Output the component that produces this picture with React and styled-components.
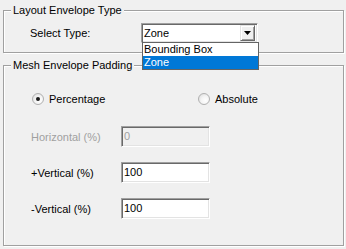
import React from "react";
import styled, { createGlobalStyle } from "styled-components";

const GlobalStyle = createGlobalStyle`
  html, body {
    margin: 0;
    padding: 0;
    background: #f0f0f0;
    width: 346px;
    height: 249px;
    overflow: hidden;
  }
  body {
    font-family: "Liberation Sans", Arial, sans-serif;
    font-size: 11px;
    color: #000;
  }
`;

const Page = styled.div`
  display: flex;
  flex-direction: column;
  gap: 6px;
  padding: 4px 2px 0 3px;
  width: 346px;
  box-sizing: border-box;
`;

const GroupBox = styled.fieldset`
  margin: 0;
  min-width: 0;
  padding: 0;
  border: 1px solid #a0a0a0;
  box-shadow: inset 1px 1px 0 #fff, 1px 1px 0 #fff;
`;

const GroupBody = styled.div`
  padding: ${(p) => p.$pad};
`;

const Legend = styled.legend`
  margin-left: 7px;
  padding: 0 2px;
  line-height: 13px;
  background: #f0f0f0;
  color: #000;
`;

const SelectRow = styled.div`
  display: grid;
  grid-template-columns: 111px 117px;
  align-items: center;
`;

const Label = styled.span`
  color: ${(p) => (p.$disabled ? "#a0a0a0" : "#000")};
  white-space: nowrap;
`;

const Combo = styled.div`
  position: relative;
  height: 20px;
  box-sizing: border-box;
  display: flex;
  align-items: center;
  background: #fff;
  border: 1px solid;
  border-color: #a0a0a0 #fff #fff #a0a0a0;
  box-shadow: inset 1px 1px 0 #696969, inset -1px -1px 0 #e3e3e3;
  padding: 0 2px 0 2px;
`;

const ComboText = styled.span`
  flex: 1;
  line-height: 14px;
`;

const ArrowButton = styled.div`
  width: 15px;
  height: 16px;
  box-sizing: border-box;
  display: flex;
  align-items: center;
  justify-content: center;
  background: #f0f0f0;
  border: 1px solid;
  border-color: #e3e3e3 #696969 #696969 #e3e3e3;
  box-shadow: inset 1px 1px 0 #fff, inset -1px -1px 0 #a0a0a0;
`;

const DropList = styled.ul`
  position: absolute;
  top: 100%;
  left: 0;
  width: 117px;
  margin: 0;
  padding: 0;
  list-style: none;
  box-sizing: border-box;
  background: #fff;
  border: 1px solid #646464;
  z-index: 2;
`;

const DropItem = styled.li`
  line-height: 13px;
  height: 13px;
  padding-left: 1px;
  background: ${(p) => (p.$selected ? "#0078d7" : "#fff")};
  color: ${(p) => (p.$selected ? "#fff" : "#000")};
`;

const RadioRow = styled.div`
  display: grid;
  grid-template-columns: 166px auto;
  height: 22px;
  align-items: center;
  padding-left: 1px;
`;

const RadioOption = styled.label`
  display: flex;
  align-items: center;
  gap: 5px;
`;

const RadioCircle = styled.span`
  width: 12px;
  height: 12px;
  box-sizing: border-box;
  border-radius: 50%;
  border: 1px solid #b0b0b0;
  background: radial-gradient(circle at 65% 65%, #ffffff 0%, #f4f4f4 45%, #d8d8d8 100%);
  display: flex;
  align-items: center;
  justify-content: center;
  &::after {
    content: "";
    width: 4px;
    height: 4px;
    border-radius: 50%;
    background: ${(p) => (p.$checked ? "#1b1b1b" : "transparent")};
  }
`;

const FieldGrid = styled.div`
  display: grid;
  grid-template-columns: 90px 89px;
  grid-auto-rows: 21px;
  row-gap: 15px;
  align-items: center;
  margin-top: 16px;
`;

const TextBox = styled.div`
  height: 21px;
  box-sizing: border-box;
  border: 1px solid;
  border-color: #a0a0a0 #fff #fff #a0a0a0;
  box-shadow: inset 1px 1px 0 #696969, inset -1px -1px 0 #e3e3e3;
  background: ${(p) => (p.$disabled ? "#f0f0f0" : "#fff")};
  color: ${(p) => (p.$disabled ? "#a0a0a0" : "#000")};
  padding: 2px 0 0 2px;
  line-height: 14px;
`;

const DownArrow = () => (
  <svg width="7" height="4" viewBox="0 0 7 4">
    <polygon points="0,0 7,0 3.5,4" fill="#000" />
  </svg>
);

export default function App() {
  return (
    <>
      <GlobalStyle />
      <Page>
        <GroupBox>
          <Legend>Layout Envelope Type</Legend>
          <GroupBody $pad="6px 0 9px 26px">
            <SelectRow>
              <Label>Select Type:</Label>
              <Combo>
                <ComboText>Zone</ComboText>
                <ArrowButton>
                  <DownArrow />
                </ArrowButton>
                <DropList>
                  <DropItem>Bounding Box</DropItem>
                  <DropItem $selected>Zone</DropItem>
                </DropList>
              </Combo>
            </SelectRow>
          </GroupBody>
        </GroupBox>
        <GroupBox>
          <Legend>Mesh Envelope Padding</Legend>
          <GroupBody $pad="16px 0 26px 27px">
            <RadioRow>
              <RadioOption>
                <RadioCircle $checked />
                <span>Percentage</span>
              </RadioOption>
              <RadioOption>
                <RadioCircle />
                <span>Absolute</span>
              </RadioOption>
            </RadioRow>
            <FieldGrid>
              <Label $disabled>Horizontal (%)</Label>
              <TextBox $disabled>0</TextBox>
              <Label>+Vertical (%)</Label>
              <TextBox>100</TextBox>
              <Label>-Vertical (%)</Label>
              <TextBox>100</TextBox>
            </FieldGrid>
          </GroupBody>
        </GroupBox>
      </Page>
    </>
  );
}
